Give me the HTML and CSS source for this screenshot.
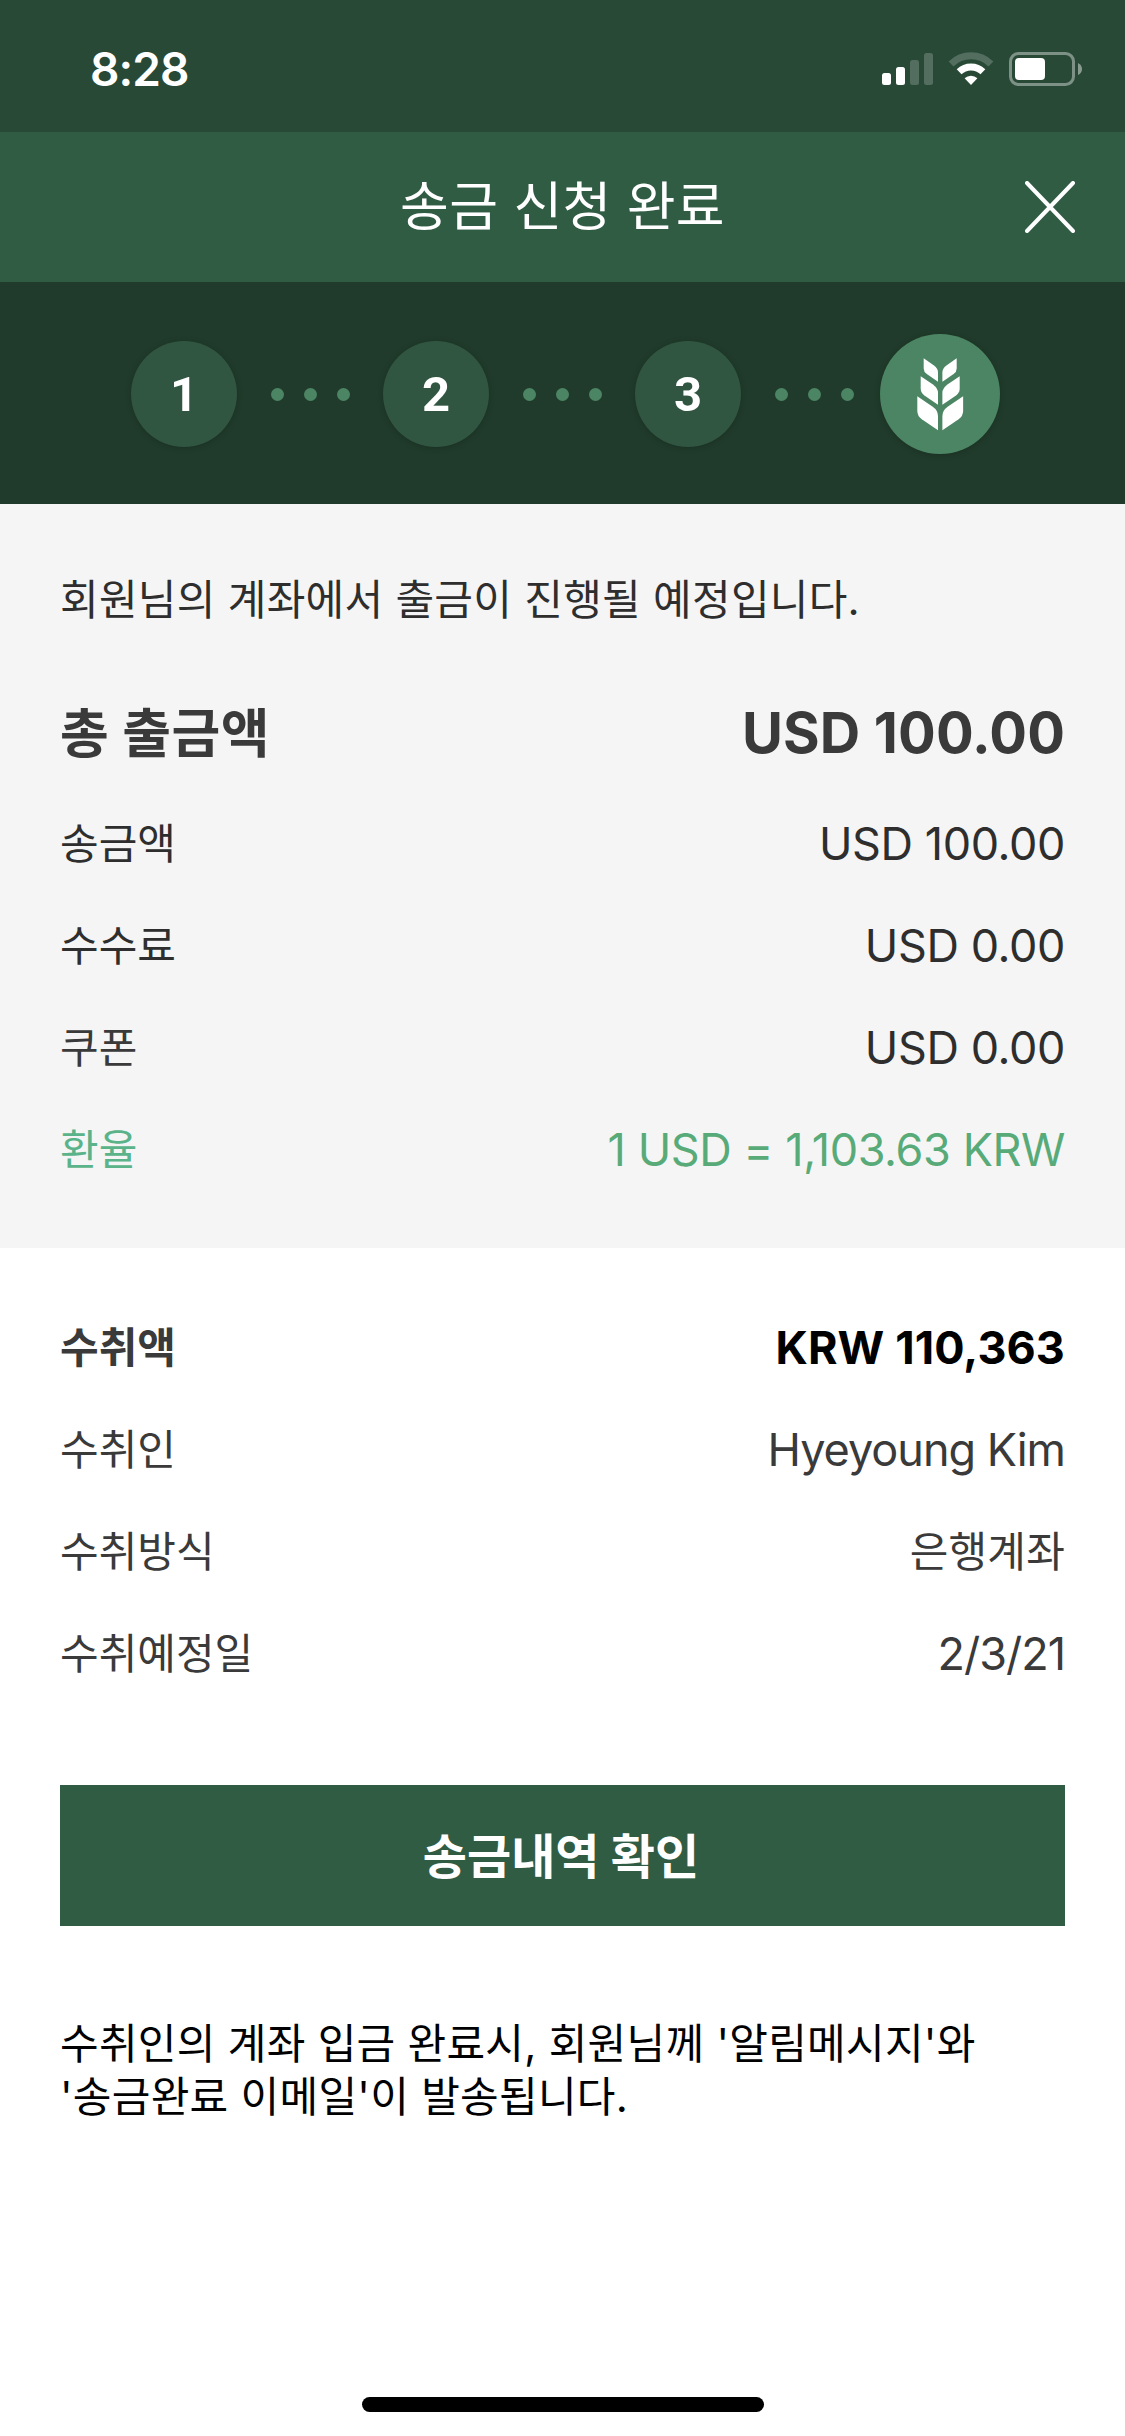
FILE: index.html
```html
<!DOCTYPE html>
<html lang="ko">
  <head>
    <meta charset="UTF-8" />
    <meta name="viewport" content="width=device-width, initial-scale=1.0" />
    <title>송금 신청 완료</title>
    <link rel="stylesheet" href="styles.css">
  </head>
  <body>
    <div class="status-bar">
      <span class="time">8:28</span>
      <svg class="status-icons" width="204" height="34" viewBox="0 0 204 34">
        <!-- signal -->
        <g fill="#fff">
          <rect x="2" y="21" width="9" height="12" rx="2.5" />
          <rect x="16" y="15" width="9" height="18" rx="2.5" />
          <rect x="30" y="8" width="9" height="25" rx="2.5" opacity="0.2" />
          <rect x="44" y="1" width="9" height="32" rx="2.5" opacity="0.2" />
        </g>
        <!-- wifi -->
        <path d="M71.1 11.9A28.3 28.3 0 0 1 110.9 11.9" fill="none" stroke="#fff" stroke-width="7" opacity="0.2" />
        <path d="M79.1 19.7A17.3 17.3 0 0 1 102.9 19.7" fill="none" stroke="#fff" stroke-width="7" />
        <path d="M91 33L84.6 26.2A9.3 9.3 0 0 1 97.4 26.2Z" fill="#fff" />
        <!-- battery -->
        <rect x="130.5" y="1.5" width="63" height="31" rx="8" fill="none" stroke="#fff" stroke-width="3" opacity="0.4" />
        <rect x="135" y="6" width="30" height="22" rx="4" fill="#fff" />
        <path d="M198 11Q202 13 202 17T198 23Z" fill="#fff" opacity="0.45" />
      </svg>
    </div>

    <header class="header">
      <h1>송금 신청 완료</h1>
      <button class="close" aria-label="닫기">
        <svg width="50" height="52" viewBox="0 0 50 52">
          <path d="M2 2L48 50M48 2L2 50" stroke="#fff" stroke-width="4" stroke-linecap="round" />
        </svg>
      </button>
    </header>

    <div class="steps">
      <div class="step">1</div>
      <div class="dots"><i></i><i></i><i></i></div>
      <div class="step">2</div>
      <div class="dots"><i></i><i></i><i></i></div>
      <div class="step">3</div>
      <div class="dots"><i></i><i></i><i></i></div>
      <div class="step active">
        <svg width="47" height="73" viewBox="0 0 47 73" fill="#fff">
          <g id="leaves">
            <path d="M6.7 0.3L17 7.4Q21 10.2 21 14.5V23.7L9.8 16Q6.7 13.8 6.7 10.5Z" />
            <path d="M3.7 18.3L16 26.6Q21 30.2 21 35V46.7L7.4 37.4Q3.7 34.7 3.7 30.5Z" />
            <path d="M0.3 38.3L15.4 48.4Q21 52.2 21 58V72.3L4.8 61.2Q0.3 58 0.3 53Z" />
          </g>
          <use href="#leaves" transform="matrix(-1 0 0 1 46.4 0)" />
        </svg>
      </div>
    </div>

    <section class="withdraw">
      <p class="notice">회원님의 계좌에서 출금이 진행될 예정입니다.</p>
      <div class="row total">
        <span class="label">총 출금액</span>
        <span class="value">USD 100.00</span>
      </div>
      <div class="row">
        <span class="label">송금액</span>
        <span class="value">USD 100.00</span>
      </div>
      <div class="row">
        <span class="label">수수료</span>
        <span class="value">USD 0.00</span>
      </div>
      <div class="row">
        <span class="label coupon">쿠폰</span>
        <span class="value">USD 0.00</span>
      </div>
      <div class="row rate">
        <span class="label">환율</span>
        <span class="value">1 USD = 1,103.63 KRW</span>
      </div>
    </section>

    <section class="receive">
      <div class="row amount">
        <span class="label">수취액</span>
        <span class="value">KRW 110,363</span>
      </div>
      <div class="row">
        <span class="label">수취인</span>
        <span class="value tight">Hyeyoung Kim</span>
      </div>
      <div class="row">
        <span class="label">수취방식</span>
        <span class="value korean">은행계좌</span>
      </div>
      <div class="row">
        <span class="label">수취예정일</span>
        <span class="value tight">2/3/21</span>
      </div>
      <button class="confirm">송금내역 확인</button>
      <p class="info">수취인의 계좌 입금 완료시, 회원님께 '알림메시지'와<br>'송금완료 이메일'이 발송됩니다.</p>
    </section>

    <div class="home-indicator"></div>
  </body>
</html>
```
FILE: styles.css
```css
* {
  margin: 0;
  padding: 0;
  box-sizing: border-box;
}
body {
  width: 1125px;
  height: 2436px;
  display: flex;
  flex-direction: column;
  background: #fff;
  color: #3a3a3a;
  font-family: Inter, "Noto Sans CJK KR", sans-serif;
  font-size: 42px;
  overflow: hidden;
}
button {
  border: none;
  background: none;
  color: #fff;
  font-family: inherit;
}
.status-bar {
  height: 132px;
  padding: 6px 41px 0 90px;
  display: flex;
  align-items: center;
  justify-content: space-between;
  background: #284936;
}
.time {
  color: #fff;
  font-size: 46px;
  font-weight: 600;
  line-height: 56px;
  letter-spacing: -0.9px;
}
.header {
  height: 150px;
  padding: 0 50px;
  display: grid;
  grid-template-columns: 50px 1fr 50px;
  align-items: center;
  background: #315c44;
}
.header h1 {
  grid-column: 2;
  color: #fff;
  font-size: 53px;
  font-weight: 400;
  line-height: 80px;
  letter-spacing: 0.3px;
  text-align: center;
}
.close {
  height: 52px;
}
.close svg {
  display: block;
}
.steps {
  height: 222px;
  padding: 2px 132px 0 131px;
  display: flex;
  align-items: center;
  justify-content: space-between;
  background: #203b2b;
}
.step {
  width: 106px;
  height: 106px;
  display: flex;
  align-items: center;
  justify-content: center;
  border-radius: 50%;
  background: #305541;
  box-shadow: 0 1px 6px rgba(0, 0, 0, 0.2);
  color: #fff;
  font-family: Roboto, sans-serif;
  font-size: 49px;
  font-weight: 700;
}
.step.active {
  width: 120px;
  height: 120px;
  margin: 0 -7px;
  background: #4c8564;
}
.dots {
  display: flex;
  gap: 20px;
}
.dots i {
  width: 13px;
  height: 13px;
  border-radius: 50%;
  background: #4c8564;
}
.withdraw {
  height: 744px;
  padding: 61px 60px 0;
  background: #f5f5f5;
  color: #2e2e2e;
}
.notice {
  height: 70px;
  line-height: 70px;
  letter-spacing: 0.27px;
}
.row {
  height: 102px;
  display: flex;
  align-items: center;
  justify-content: space-between;
}
.label,
.value.korean {
  padding-bottom: 6px;
}
.value {
  font-size: 45px;
  letter-spacing: -0.4px;
}
.value.tight {
  letter-spacing: -1px;
}
.row.total {
  height: 118px;
  margin-top: 39px;
  color: #3a3a3a;
  font-size: 53px;
  font-weight: 700;
}
.total .label {
  letter-spacing: 0.5px;
}
.total .value {
  font-size: 56px;
  letter-spacing: 0.1px;
}
.label.coupon {
  color: #3a3a3a;
}
.rate .label {
  color: #5bb38a;
}
.rate .value {
  color: #58ab78;
}
.receive {
  padding: 48px 60px 0;
}
.amount {
  font-weight: 700;
}
.amount .value {
  color: #000;
  letter-spacing: 0.1px;
}
.value.korean {
  font-size: 42px;
  letter-spacing: 0.2px;
}
.confirm {
  width: 100%;
  height: 141px;
  margin-top: 81px;
  padding: 0 3px 6px 0;
  background: #315c44;
  font-size: 48px;
  font-weight: 700;
}
.info {
  margin-top: 91px;
  color: #000;
  line-height: 53px;
  letter-spacing: 0.27px;
}
.home-indicator {
  width: 402px;
  height: 15px;
  margin: auto auto 24px;
  border-radius: 8px;
  background: #000;
}
```
